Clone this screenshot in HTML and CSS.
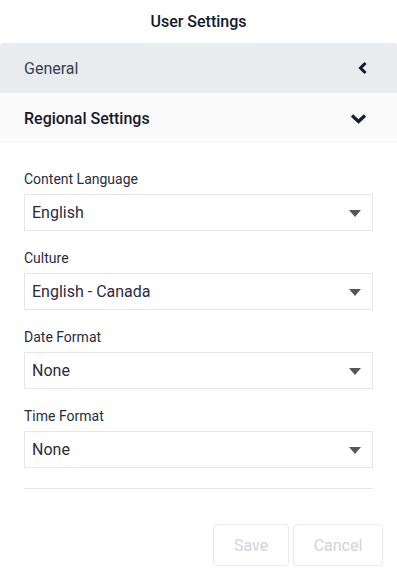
FILE: index.html
```html
<!DOCTYPE html>
<html lang="en">
<head>
  <meta charset="UTF-8">
  <title>User Settings</title>
  <meta name="viewport" content="width=device-width, initial-scale=1.0">
  <link rel="stylesheet" href="styles.css">
</head>
<body>
  <div class="panel">
    <!-- header -->
    <header class="panel-title">User Settings</header>

    <!-- accordion -->
    <div class="section section-closed">
      <span>General</span>
      <svg class="chev" width="10" height="14" viewBox="0 0 10 14"><path d="M7.5 2 L2.5 7 L7.5 12" fill="none" stroke="#16182b" stroke-width="3"/></svg>
    </div>
    <div class="section section-open">
      <span>Regional Settings</span>
      <svg class="chev" width="17" height="11" viewBox="0 0 17 11"><path d="M2 2.5 L8.5 8.5 L15 2.5" fill="none" stroke="#16182b" stroke-width="3.2"/></svg>
    </div>

    <div class="form">
      <div class="field">
        <label>Content Language</label>
        <div class="select"><span>English</span><i class="caret"></i></div>
      </div>
      <div class="field">
        <label>Culture</label>
        <div class="select"><span>English - Canada</span><i class="caret"></i></div>
      </div>
      <div class="field">
        <label>Date Format</label>
        <div class="select"><span>None</span><i class="caret"></i></div>
      </div>
      <div class="field">
        <label>Time Format</label>
        <div class="select"><span>None</span><i class="caret"></i></div>
      </div>
      <hr class="divider">
    </div>

    <div class="actions">
      <button class="btn btn-save" disabled>Save</button>
      <button class="btn btn-cancel" disabled>Cancel</button>
    </div>
  </div>
</body>
</html>
```

FILE: styles.css
```css
/* reset */
html, body {
  margin: 0;
  padding: 0;
  background: #ffffff;
  color: #1b1d2e;
  font-family: Roboto, 'Noto Sans', sans-serif;
  box-sizing: border-box;
}
*, *::before, *::after {
  box-sizing: inherit;
}
.panel {
  width: 397px;
}
/* title */
.panel-title {
  height: 43px;
  display: flex;
  align-items: center;
  justify-content: center;
  font-size: 16px;
  font-weight: 500;
  color: #16182b;
}
/* accordion rows */
.section {
  height: 50px;
  display: flex;
  align-items: center;
  justify-content: space-between;
  padding: 0 29px 0 24px;
  font-size: 16px;
}
.section-closed {
  background: #e9ecef;
  border-radius: 3px 3px 0 0;
  color: #3a3d4f;
}
.section-open {
  background: #fafafa;
  font-weight: 500;
  color: #16182b;
}
.section-open .chev {
  margin-right: 1px;
}
/* form */
.form {
  padding: 26px 24px 0;
}
.field {
  margin-bottom: 17px;
}
.field label {
  display: block;
  font-size: 14px;
  line-height: 20px;
  color: #2a2c3d;
  margin-bottom: 5px;
}
.select {
  height: 37px;
  border: 1px solid #e6e7ea;
  display: flex;
  align-items: center;
  justify-content: space-between;
  padding: 0 11px 0 7px;
  font-size: 16px;
  color: #2a2c3d;
}
.caret {
  width: 0;
  height: 0;
  border-left: 6.5px solid transparent;
  border-right: 6.5px solid transparent;
  border-top: 7px solid #55565f;
  margin-top: 2px;
}
.divider {
  border: 0;
  border-top: 1px solid #e6e7ea;
  margin: 20px 0 0;
}
/* buttons */
.actions {
  display: flex;
  justify-content: flex-end;
  gap: 4px;
  padding: 35px 14px 0;
}
.btn {
  height: 42px;
  background: #ffffff;
  border: 1px solid #e8e9ec;
  border-radius: 4px;
  font-family: Roboto, sans-serif;
  font-size: 16px;
  color: #d0d4db;
}
.btn-save {
  width: 76px;
}
.btn-cancel {
  width: 90px;
}
```
